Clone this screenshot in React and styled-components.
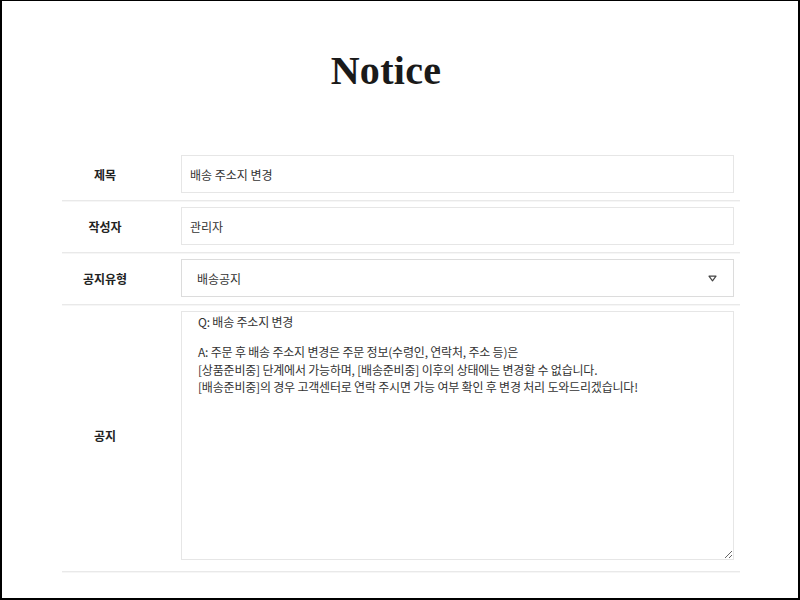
import React from "react";
import styled, { createGlobalStyle } from "styled-components";

const Global = createGlobalStyle`
  html, body { margin: 0; padding: 0; background: #fff; }
  body { font-family: "Noto Sans CJK KR", "Noto Sans", sans-serif; }
  * { box-sizing: border-box; }
`;

const Frame = styled.div`
  width: 800px;
  height: 600px;
  border-style: solid;
  border-color: #000;
  border-width: 1px 2px 2px 2px;
  background: #fff;
  padding: 50px 0 0 60px;
  overflow: hidden;
`;

const Container = styled.div`
  width: 678px;
`;

const Title = styled.h1`
  margin: 0 0 58px;
  padding-right: 30px;
  text-align: center;
  font-family: "Liberation Serif", "DejaVu Serif", serif;
  font-weight: 700;
  font-size: 40px;
  line-height: 40px;
  color: #1a1a1a;
  letter-spacing: 0.3px;
`;

const Row = styled.div`
  display: grid;
  grid-template-columns: 86px 1fr;
  column-gap: 33px;
  padding: 6px 6px ${(p) => (p.$tall ? "11px" : "7px")} 0;
  border-bottom: 1px solid #e9e9e9;
  box-shadow: 0 1px 0 #f6f6f6;
`;

const Label = styled.div`
  display: flex;
  align-items: center;
  justify-content: center;
  font-size: 12px;
  font-weight: 700;
  color: #222;
`;

const Field = styled.div`
  height: 38px;
  border: 1px solid #e6e6e6;
  display: flex;
  align-items: center;
  padding-left: ${(p) => (p.$select ? "15px" : "8px")};
  padding-right: 16px;
  font-size: 12px;
  color: #333;
  justify-content: space-between;
  ${(p) => (p.$select ? "border-color: #dcdcdc;" : "")}
`;

const Arrow = styled.svg`
  width: 9px;
  height: 7px;
`;

const Area = styled.div`
  height: 249px;
  border: 1px solid #e6e6e6;
  padding: 1px 16px;
  font-size: 12px;
  line-height: 17.3px;
  letter-spacing: -0.2px;
  color: #333;
  overflow: auto;
  resize: vertical;
`;

const Question = styled.p`
  margin: 0 0 13px;
`;

const Answer = styled.p`
  margin: 0;
`;

export default function App() {
  return (
    <>
      <Global />
      <Frame>
        <Container>
          <Title>Notice</Title>
          <Row>
            <Label>제목</Label>
            <Field>배송 주소지 변경</Field>
          </Row>
          <Row>
            <Label>작성자</Label>
            <Field>관리자</Field>
          </Row>
          <Row>
            <Label>공지유형</Label>
            <Field $select>
              <span>배송공지</span>
              <Arrow viewBox="0 0 9 7">
                <path d="M1 1.2 L8 1.2 L4.5 5.8 Z" fill="none" stroke="#444" strokeWidth="1.2" strokeLinejoin="round" />
              </Arrow>
            </Field>
          </Row>
          <Row $tall>
            <Label>공지</Label>
            <Area>
              <Question>Q: 배송 주소지 변경</Question>
              <Answer>
                A: 주문 후 배송 주소지 변경은 주문 정보(수령인, 연락처, 주소 등)은
                <br />
                [상품준비중] 단계에서 가능하며, [배송준비중] 이후의 상태에는 변경할 수 없습니다.
                <br />
                [배송준비중]의 경우 고객센터로 연락 주시면 가능 여부 확인 후 변경 처리 도와드리겠습니다!
              </Answer>
            </Area>
          </Row>
        </Container>
      </Frame>
    </>
  );
}
